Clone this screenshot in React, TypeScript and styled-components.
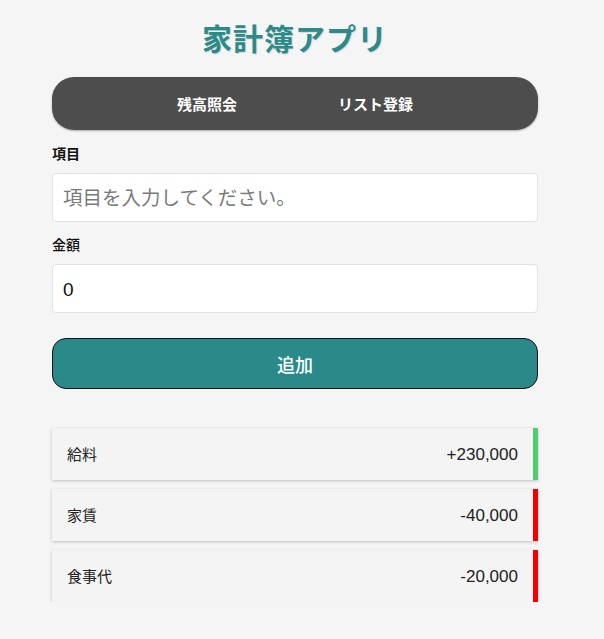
import React from "react";
import styled, { createGlobalStyle } from "styled-components";

const Global = createGlobalStyle`
  html, body { margin: 0; padding: 0; background: #f5f5f5; }
  body { font-family: "Liberation Sans", "Noto Sans CJK JP", sans-serif; color: #222; }
`;

const Page = styled.div`
  width: 486px;
  margin-left: 52px;
  padding-top: 12px;
  display: flex;
  flex-direction: column;
`;

const Title = styled.h1`
  margin: 0;
  height: 50px;
  text-align: center;
  font-family: "Noto Sans CJK JP", sans-serif;
  font-weight: 700;
  font-size: 30px;
  line-height: 50px;
  color: #2b8a8a;
  letter-spacing: 1px;
  text-shadow: 1px 1px 1px rgba(0, 0, 0, 0.12);
`;

const Nav = styled.nav`
  margin: 15px 0 2px;
  height: 53px;
  border-radius: 22px;
  background: #4d4d4d;
  display: flex;
  justify-content: center;
  align-items: center;
  gap: 101px;
  box-sizing: border-box;
  box-shadow: 0 1px 2px rgba(0, 0, 0, 0.3);
`;

const NavItem = styled.span`
  color: #fff;
  font-family: "Noto Sans CJK JP", sans-serif;
  font-weight: 700;
  font-size: 15px;
`;

const Label = styled.label<{ $bold?: boolean }>`
  display: block;
  margin-top: 11px;
  font-family: "Noto Sans CJK JP", sans-serif;
  font-size: 14px;
  font-weight: ${(p) => (p.$bold ? 700 : 500)};
  color: #111;
  line-height: 20px;
`;

const Input = styled.input`
  box-sizing: border-box;
  margin: 10px 0 1px;
  width: 100%;
  height: 49px;
  border: 1px solid #e2e2e2;
  border-radius: 4px;
  background: #fff;
  padding: 2px 10px 0;
  font-family: "Liberation Sans", "Noto Sans CJK JP", sans-serif;
  font-size: 19px;
  color: #111;
  outline: none;
  &::placeholder {
    color: #7a7a7a;
    font-size: 19.5px;
  }
`;

const AddButton = styled.button`
  margin-top: 24px;
  height: 51px;
  width: 100%;
  border: 1.5px solid #111;
  border-radius: 14px;
  background: #2a8a8a;
  color: #fff;
  font-family: "Noto Sans CJK JP", sans-serif;
  font-size: 18px;
  font-weight: 500;
`;

const List = styled.ul`
  list-style: none;
  margin: 39px 0 0;
  padding: 0;
  display: flex;
  flex-direction: column;
  gap: 9px;
`;

const Row = styled.li<{ $income: boolean }>`
  box-sizing: border-box;
  height: 52px;
  display: flex;
  align-items: baseline;
  justify-content: space-between;
  padding: 18px 15px 0;
  background: #f4f4f4;
  border-right: 5px solid ${(p) => (p.$income ? "#4fce6e" : "#f40000")};
  box-shadow: 0 1px 3px rgba(0, 0, 0, 0.22);
  color: #222;
`;

const RowName = styled.span`
  font-family: "Noto Sans CJK JP", sans-serif;
  font-size: 15px;
  line-height: 1;
`;

const RowAmount = styled.span`
  font-family: "Liberation Sans", sans-serif;
  font-size: 17px;
  line-height: 1;
`;

const items = [
  { name: "給料", amount: "+230,000", income: true },
  { name: "家賃", amount: "-40,000", income: false },
  { name: "食事代", amount: "-20,000", income: false },
];

export default function App() {
  return (
    <>
      <Global />
      <Page>
        <Title>家計簿アプリ</Title>
        <Nav>
          <NavItem>残高照会</NavItem>
          <NavItem>リスト登録</NavItem>
        </Nav>
        <Label $bold>項目</Label>
        <Input placeholder="項目を入力してください。" />
        <Label>金額</Label>
        <Input defaultValue="0" />
        <AddButton>追加</AddButton>
        <List>
          {items.map((it) => (
            <Row key={it.name} $income={it.income}>
              <RowName>{it.name}</RowName>
              <RowAmount>{it.amount}</RowAmount>
            </Row>
          ))}
        </List>
      </Page>
    </>
  );
}
